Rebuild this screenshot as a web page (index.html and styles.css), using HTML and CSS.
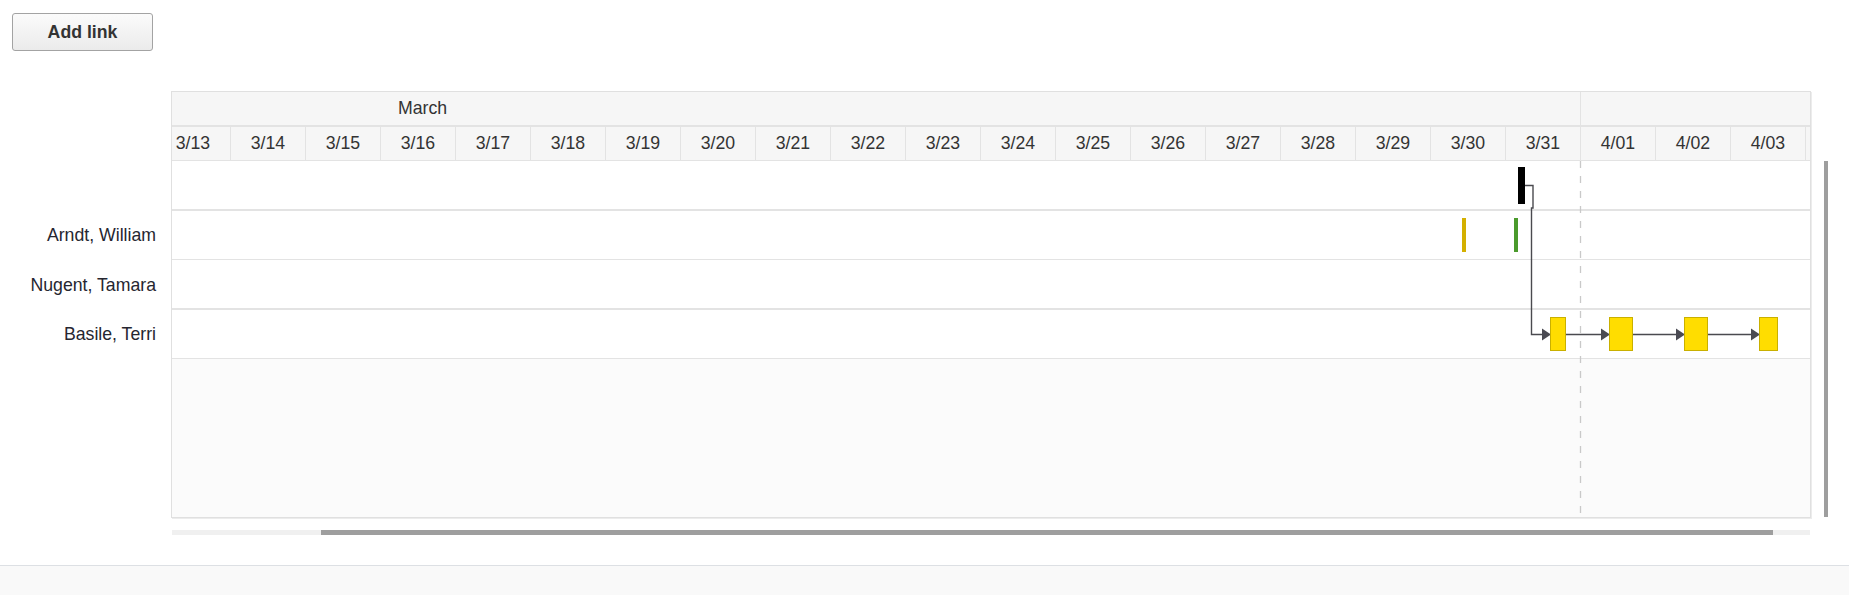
FILE: index.html
```html
<!DOCTYPE html>
<html>
<head>
<meta charset="utf-8">
<link rel="stylesheet" href="styles.css">
</head>
<body>
<div class="page">
  <div class="toolbar"><button class="btn">Add link</button></div>
  <div class="gantt-wrap">
    <div class="names">
      <div class="names-head"></div>
      <div class="name-row r1"></div>
      <div class="name-row r2">Arndt, William</div>
      <div class="name-row r3">Nugent, Tamara</div>
      <div class="name-row r4">Basile, Terri</div>
    </div>
    <div class="gantt-col">
      <div class="gantt">
        <div class="viewport">
          <div class="track">
            <div class="month-row">
              <div class="month march">March</div>
              <div class="month april"></div>
            </div>
            <div class="day-row">
              <div class="day">3/13</div><div class="day">3/14</div><div class="day">3/15</div><div class="day">3/16</div><div class="day">3/17</div><div class="day">3/18</div><div class="day">3/19</div><div class="day">3/20</div><div class="day">3/21</div><div class="day">3/22</div><div class="day">3/23</div><div class="day">3/24</div><div class="day">3/25</div><div class="day">3/26</div><div class="day">3/27</div><div class="day">3/28</div><div class="day">3/29</div><div class="day">3/30</div><div class="day">3/31</div><div class="day">4/01</div><div class="day">4/02</div><div class="day">4/03</div><div class="day"></div>
            </div>
            <div class="body">
              <div class="row thick"></div>
              <div class="row thin"></div>
              <div class="row thick"></div>
              <div class="row thin"></div>
              <div class="filler"></div>
              <svg class="overlay" width="1725" height="356" viewBox="0 0 1725 356">
                <line x1="1424.5" y1="0" x2="1424.5" y2="352" stroke="#c9c9c9" stroke-width="1.3" stroke-dasharray="7 8"/>
                <path d="M1367 24.5 H1377 V47 H1375.5 V173.5 H1386" fill="none" stroke="#4a4a4f" stroke-width="1.4"/>
                <polygon points="1386,167.5 1395,173.5 1386,179.5" fill="#4a4a52"/>
                <path d="M1410 173.5 H1446" fill="none" stroke="#4a4a4f" stroke-width="1.4"/>
                <polygon points="1445,167.5 1454,173.5 1445,179.5" fill="#4a4a52"/>
                <path d="M1477 173.5 H1521" fill="none" stroke="#4a4a4f" stroke-width="1.4"/>
                <polygon points="1520,167.5 1529,173.5 1520,179.5" fill="#4a4a52"/>
                <path d="M1552 173.5 H1596" fill="none" stroke="#4a4a4f" stroke-width="1.4"/>
                <polygon points="1595,167.5 1604,173.5 1595,179.5" fill="#4a4a52"/>
              </svg>
              <div class="bar milestone" style="left:1362px;top:6px;width:7px;height:37px"></div>
              <div class="bar gold" style="left:1306px;top:57px;width:4px;height:34px"></div>
              <div class="bar green" style="left:1358px;top:57px;width:4px;height:34px"></div>
              <div class="bar task" style="left:1394px;top:156px;width:16px;height:34px"></div>
              <div class="bar task" style="left:1453px;top:156px;width:24px;height:34px"></div>
              <div class="bar task" style="left:1528px;top:156px;width:24px;height:34px"></div>
              <div class="bar task" style="left:1603px;top:156px;width:19px;height:34px"></div>
            </div>
          </div>
        </div>
      </div>
      <div class="hscroll"><div class="hthumb"></div></div>
    </div>
    <div class="vscroll"></div>
  </div>
  <div class="footer"></div>
</div>
</body>
</html>
```
FILE: styles.css
```css
html, body {
  margin: 0;
  padding: 0;
  background: #fff;
}
body {
  font-family: "Liberation Sans", Arial, sans-serif;
  font-size: 17.7px;
  color: #333;
}
.page {
  width: 1849px;
  height: 595px;
  overflow: hidden;
  display: flex;
  flex-direction: column;
}
.toolbar {
  padding: 13px 0 0 12px;
  height: 37px;
}
.btn {
  width: 141px;
  height: 38px;
  box-sizing: border-box;
  border: 1px solid #a3a3a3;
  border-radius: 3px;
  background: linear-gradient(#fbfbfb, #ebebeb);
  font-family: "Liberation Sans", Arial, sans-serif;
  font-weight: bold;
  font-size: 17.7px;
  color: #333;
  padding: 0;
}
.gantt-wrap {
  margin-top: 41px;
  display: flex;
  align-items: flex-start;
}
.names {
  width: 171px;
  box-sizing: border-box;
  padding-right: 15px;
  text-align: right;
  color: #262630;
}
.names-head { height: 70px; }
.name-row { white-space: nowrap; }
.name-row.r1 { height: 50px; }
.name-row.r2 { height: 49px; line-height: 49px; }
.name-row.r3 { height: 50px; line-height: 50px; }
.name-row.r4 { height: 49px; line-height: 49px; }
.gantt-col {
  width: 1640px;
  display: flex;
  flex-direction: column;
}
.gantt {
  width: 1640px;
  box-sizing: border-box;
  border: 1px solid #e0e0e0;
  box-shadow: 1px 1px 0 #ececec;
}
.viewport {
  width: 1638px;
  overflow: hidden;
}
.track {
  width: 1725px;
  margin-left: -16px;
}
.month-row {
  display: flex;
  height: 33px;
  border-bottom: 2px solid #e3e3e3;
  background: #f6f6f6;
}
.month {
  box-sizing: border-box;
  height: 33px;
  line-height: 33px;
  border-right: 1px solid #e3e3e3;
}
.march {
  width: 1425px;
  padding-left: 242px;
}
.april { width: 300px; }
.day-row {
  display: flex;
  height: 33px;
  border-bottom: 1px solid #e3e3e3;
  background: #f6f6f6;
}
.day {
  flex: 0 0 75px;
  box-sizing: border-box;
  border-right: 1px solid #e3e3e3;
  text-align: center;
  line-height: 33px;
}
.body {
  position: relative;
  display: flex;
  flex-direction: column;
  height: 356px;
}
.row {
  height: 48px;
  background: #fff;
}
.row.thick { border-bottom: 2px solid #e3e3e3; }
.row.thin { border-bottom: 1px solid #e3e3e3; }
.filler {
  flex: 1;
  background: #fbfbfb;
}
.overlay {
  position: absolute;
  left: 0;
  top: 0;
}
.bar {
  position: absolute;
  box-sizing: border-box;
}
.milestone { background: #000; }
.gold { background: #d4b000; }
.green { background: #4a9a2c; }
.task {
  background: #ffdd00;
  border: 1px solid #c9b000;
}
.hscroll {
  margin-top: 12px;
  margin-left: 1px;
  width: 1638px;
  height: 5px;
  background: #f0f0f0;
}
.hthumb {
  margin-left: 149px;
  width: 1452px;
  height: 5px;
  background: #9e9e9e;
}
.vscroll {
  margin-left: 13px;
  margin-top: 70px;
  width: 4px;
  height: 356px;
  background: #9e9e9e;
}
.footer {
  margin-top: 30px;
  flex: 1;
  border-top: 1px solid #dde0e4;
  background: #f9f9f9;
}
```
